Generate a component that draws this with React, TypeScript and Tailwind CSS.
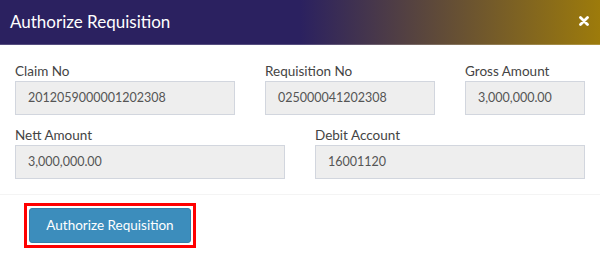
import React from 'react';

const font = { fontFamily: 'Lato, "Noto Sans", sans-serif' };

function Field({ label, value }: { label: string; value: string }) {
  return (
    <div className="flex flex-col">
      <label className="h-5 text-[13.5px] leading-5 text-[#444]">{label}</label>
      <div className="flex h-[34px] items-center border border-[#d2d6de] bg-[#eeeeee] px-3 text-[12.5px] text-[#555]">
        {value}
      </div>
    </div>
  );
}

export default function App() {
  return (
    <div className="h-[258px] w-[600px] overflow-hidden bg-white" style={font}>
      <div className="flex h-[45px] items-center justify-between border-b border-white/20 bg-[linear-gradient(to_right,#2b2160_50%,#9d7b0b)] pl-[10px] pr-[11px]">
        <h4 className="text-[17px] text-white">Authorize Requisition</h4>
        <svg width="10" height="10" viewBox="0 0 10 10" className="mb-[2px]">
          <path d="M1.5 1.5 L8.5 8.5 M8.5 1.5 L1.5 8.5" stroke="white" strokeWidth="2.8" strokeLinecap="round" />
        </svg>
      </div>

      <div className="px-[15px] pb-[15px] pt-4">
        <div className="mb-[10px] grid grid-cols-[220px_170px_120px] gap-x-[30px]">
          <Field label="Claim No" value="2012059000001202308" />
          <Field label="Requisition No" value="025000041202308" />
          <Field label="Gross Amount" value="3,000,000.00" />
        </div>
        <div className="grid grid-cols-[270px_270px] gap-x-[30px]">
          <Field label="Nett Amount" value="3,000,000.00" />
          <Field label="Debit Account" value="16001120" />
        </div>
      </div>

      <div className="border-t border-[#f4f4f4] pl-[24px] pt-[8px]">
        <div className="inline-flex border-[3px] border-[#ff0000] p-[2px]">
          <button className="h-[35px] w-[162px] rounded-[3px] border border-[#367fa9] bg-[#3c8dbc] text-[13.5px] text-white">
            Authorize Requisition
          </button>
        </div>
      </div>
    </div>
  );
}
